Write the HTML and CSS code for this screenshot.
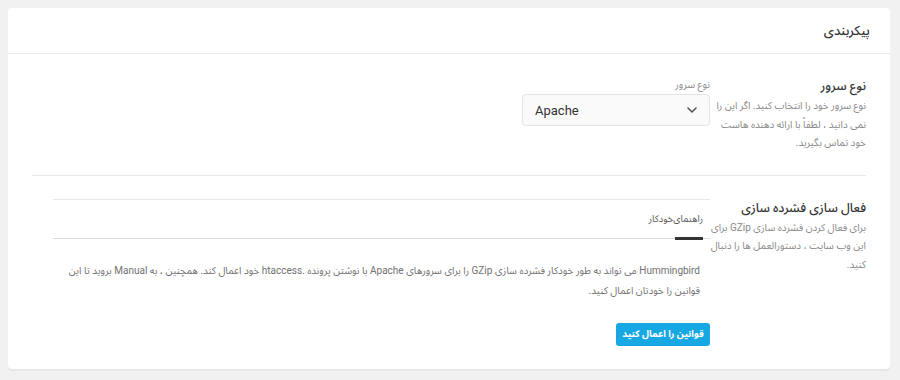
FILE: index.html
```html
<!DOCTYPE html>
<html lang="fa" dir="rtl">
<head>
<meta charset="utf-8">
<title>پیکربندی</title>
<link rel="stylesheet" href="styles.css">
</head>
<body>
<div class="card">
  <div class="card-header">
    <h2 class="card-title">پیکربندی</h2>
  </div>
  <div class="card-body">
    <div class="row row-first">
      <div class="row-label">
        <h3 class="row-title">نوع سرور</h3>
        <p class="row-desc">نوع سرور خود را انتخاب کنید. اگر این را نمی دانید ، لطفاً با ارائه دهنده هاست خود تماس بگیرید.</p>
      </div>
      <div class="row-content">
        <div class="field-label">نوع سرور</div>
        <div class="select">
          <span class="select-value">Apache</span>
          <svg class="chev" width="10" height="6" viewBox="0 0 10 6"><polyline points="1,1 5,5 9,1" fill="none" stroke="#555" stroke-width="1.6" stroke-linecap="round" stroke-linejoin="round"/></svg>
        </div>
      </div>
    </div>
    <div class="row row-second">
      <div class="row-label">
        <h3 class="row-title">فعال سازی فشرده سازی</h3>
        <p class="row-desc">برای فعال کردن فشرده سازی GZip برای این وب سایت ، دستورالعمل ها را دنبال کنید.</p>
      </div>
      <div class="row-content tabs-wrap">
        <div class="tabs">
          <div class="tab active">راهنمای‌خودکار</div>
        </div>
        <div class="tab-pane">
          <p class="pane-text">Hummingbird می تواند به طور خودکار فشرده سازی GZip را برای سرورهای Apache با نوشتن پرونده .htaccess خود اعمال کند. همچنین ، به Manual بروید تا این قوانین را خودتان اعمال کنید.</p>
          <button class="btn">قوانین را اعمال کنید</button>
        </div>
      </div>
    </div>
  </div>
</div>
</body>
</html>
```
FILE: styles.css
```css
* { box-sizing: border-box; }
html, body { margin: 0; padding: 0; }
body {
  background: #f1f1f1;
  padding: 8px 10px 8px 8px;
  font-family: Roboto, "Noto Sans Arabic", "DejaVu Sans", sans-serif;
  color: #333;
}
.card {
  background: #fff;
  border-radius: 4px;
  box-shadow: 0 2px 0 #e6e6e6;
}
.card-header {
  height: 46px;
  padding: 0 20px;
  display: flex;
  align-items: center;
  border-bottom: 1px solid #eaeaea;
}
.card-title {
  margin: 0;
  font-size: 13px;
  font-weight: 500;
  color: #333;
}
.card-body {
  padding: 0 24px 23px;
}
.row {
  display: flex;
  padding-top: 22px;
}
.row-first {
  padding-bottom: 22px;
  border-bottom: 1px solid #e8e8e8;
}
.row-label {
  width: 156px;
  flex: none;
}
.row-title {
  margin: 0 0 1px;
  font-size: 12.5px;
  line-height: 20px;
  font-weight: 500;
  color: #333;
}
.row-desc {
  margin: 0;
  font-size: 10px;
  line-height: 18.5px;
  color: #888;
}
.row-content {
  flex: 1;
}
.field-label {
  margin-top: 2px;
  font-size: 10px;
  line-height: 14px;
  color: #888;
}
.select {
  margin-top: 2px;
  width: 188px;
  height: 32px;
  border: 1px solid #e4e4e4;
  border-radius: 4px;
  background: #fafafa;
  display: flex;
  align-items: center;
  justify-content: space-between;
  flex-direction: row-reverse;
  padding: 0 12px 0 12px;
}
.select-value {
  font-size: 13px;
  color: #333;
  direction: ltr;
}
.tabs-wrap {
  margin-top: 1px;
  margin-left: 21px;
}
.tabs {
  border-top: 1px solid #e8e8e8;
  border-bottom: 1px solid #dcdcdc;
  display: flex;
  padding-right: 7px;
}
.tab {
  height: 38px;
  line-height: 38px;
  font-size: 9.5px;
  color: #555;
  position: relative;
}
.tab.active::after {
  content: "";
  position: absolute;
  right: 0;
  width: 28px;
  bottom: -2px;
  height: 3px;
  background: #333;
}
.tab-pane {
  padding: 22px 0 0 0;
}
.pane-text {
  margin: 0;
  padding: 0 10px 0 2px;
  font-size: 10px;
  line-height: 20px;
  color: #707070;
}
.btn {
  margin-top: 22px;
  height: 23px;
  width: 94px;
  border: none;
  border-radius: 3px;
  background: #17a8e3;
  color: #fff;
  font-family: inherit;
  font-size: 9.5px;
  font-weight: 700;
  padding: 0;
  cursor: pointer;
}
```
